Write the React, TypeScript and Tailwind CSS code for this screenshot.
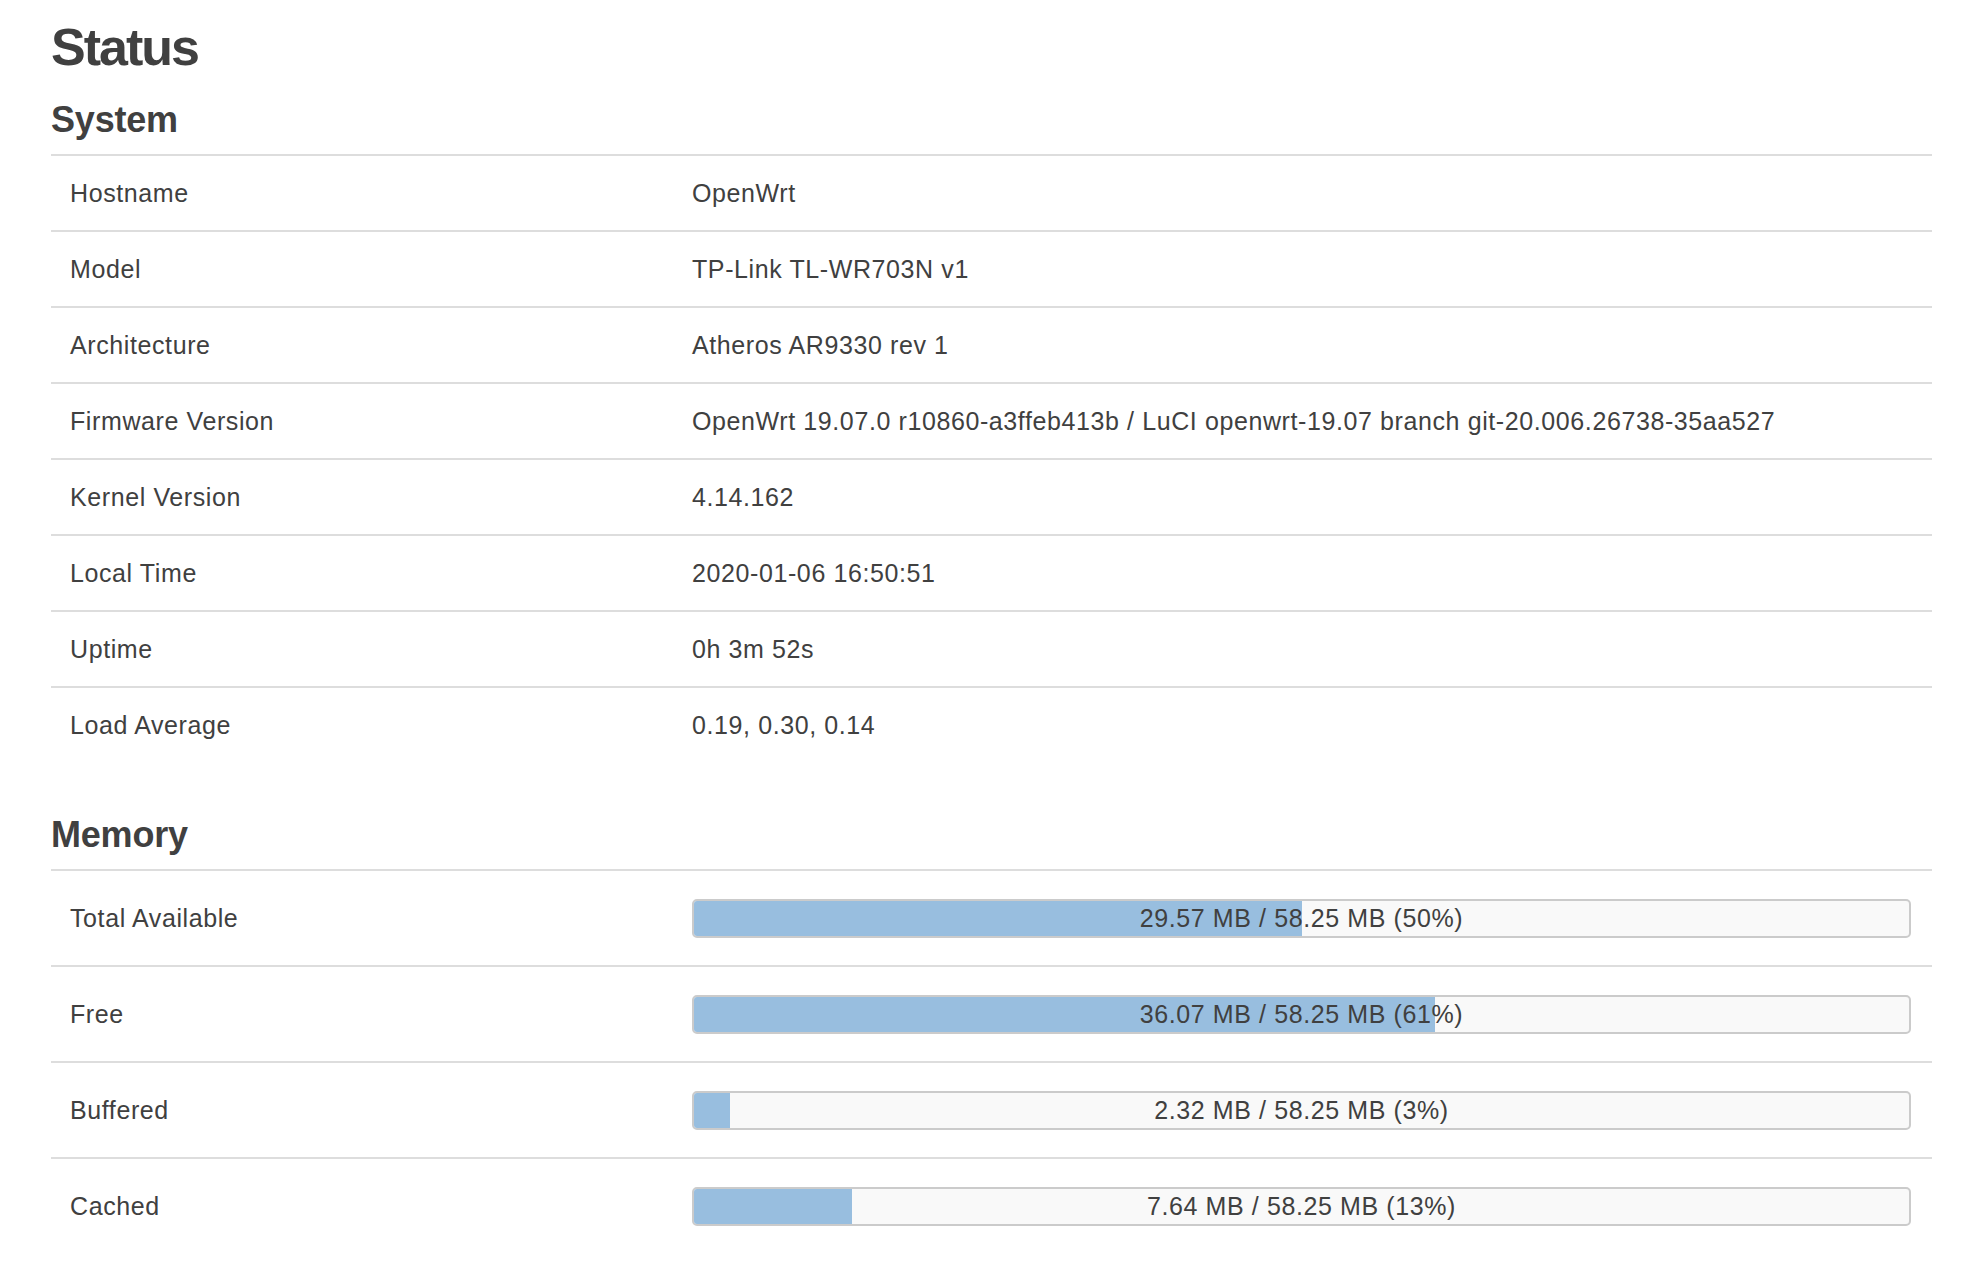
import React from "react";

const SYSTEM_ROWS = [
  { label: "Hostname", value: "OpenWrt" },
  { label: "Model", value: "TP-Link TL-WR703N v1" },
  { label: "Architecture", value: "Atheros AR9330 rev 1" },
  {
    label: "Firmware Version",
    value:
      "OpenWrt 19.07.0 r10860-a3ffeb413b / LuCI openwrt-19.07 branch git-20.006.26738-35aa527"
  },
  { label: "Kernel Version", value: "4.14.162" },
  { label: "Local Time", value: "2020-01-06 16:50:51" },
  { label: "Uptime", value: "0h 3m 52s" },
  { label: "Load Average", value: "0.19, 0.30, 0.14" }
];

const MEMORY_ROWS = [
  { label: "Total Available", used: "29.57 MB", pct: 50 },
  { label: "Free", used: "36.07 MB", pct: 61 },
  { label: "Buffered", used: "2.32 MB", pct: 3 },
  { label: "Cached", used: "7.64 MB", pct: 13 }
];

function Bar({ used, pct }: { used: string; pct: number }) {
  return (
    <div className="relative h-[39px] w-full overflow-hidden rounded-[5px] border-2 border-[#cbcbcb] bg-[#f9f9f9]">
      <div className="h-full bg-[#98bedf]" style={{ width: `${pct}%` }} />
      <div className="absolute inset-0 flex items-center justify-center text-[25px] leading-none tracking-[0.6px] text-[#404040]">
        {used} / 58.25 MB ({pct}%)
      </div>
    </div>
  );
}

export default function App() {
  return (
    <div
      className="min-h-screen bg-white pl-[51px] pt-[21px] text-[#404040]"
      style={{ fontFamily: '"Liberation Sans", Arial, Helvetica, sans-serif' }}
    >
      <div className="w-[1881px]">
        <h2 className="text-[52px] font-bold leading-none tracking-[-2px]">Status</h2>

        <h3 className="mt-[29px] mb-[16px] text-[36px] font-bold leading-none tracking-[-0.2px]">
          System
        </h3>
        <div>
          {SYSTEM_ROWS.map((row) => (
            <div
              key={row.label}
              className="flex h-[76px] items-center border-t-2 border-[#dddddd] text-[25px] leading-none tracking-[0.6px]"
            >
              <div className="w-[641px] shrink-0 pl-[19px]">{row.label}</div>
              <div>{row.value}</div>
            </div>
          ))}
        </div>

        <h3 className="mt-[55px] mb-[16px] text-[36px] font-bold leading-none tracking-[-0.2px]">
          Memory
        </h3>
        <div>
          {MEMORY_ROWS.map((row) => (
            <div
              key={row.label}
              className="flex h-[96px] items-center border-t-2 border-[#dddddd] text-[25px] leading-none tracking-[0.6px]"
            >
              <div className="w-[641px] shrink-0 pl-[19px]">{row.label}</div>
              <div className="flex-1 pr-[21px]">
                <Bar used={row.used} pct={row.pct} />
              </div>
            </div>
          ))}
        </div>
      </div>
    </div>
  );
}
